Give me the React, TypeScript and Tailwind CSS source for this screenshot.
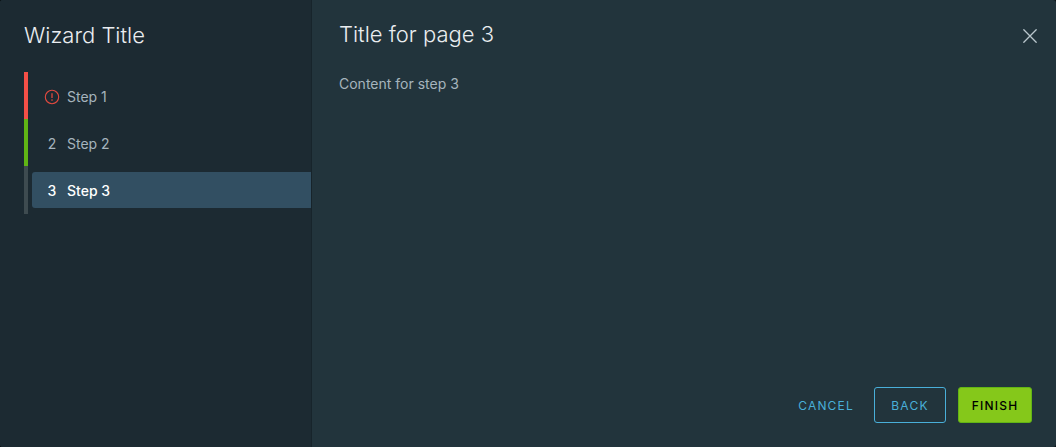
import React from "react";

function ErrorIcon() {
  return (
    <svg viewBox="0 0 16 16" className="h-4 w-4" fill="none" aria-label="Error" role="img">
      <circle cx="8" cy="8" r="6.7" stroke="#e0493f" strokeWidth="1.1" />
      <path d="M8 4.2v4.8" stroke="#e0493f" strokeWidth="1.3" />
      <circle cx="8" cy="11.1" r="0.8" fill="#e0493f" />
    </svg>
  );
}

const steps = [
  { label: "Step 1", marker: <ErrorIcon />, bar: "border-[#f54f47]", state: "text-[#a6b4bd]" },
  { label: "Step 2", marker: "2", bar: "border-[#60b515]", state: "text-[#a6b4bd]" },
  { label: "Step 3", marker: "3", bar: "border-[#3e4b50]", state: "bg-[#324f62] font-medium text-white" },
];

export default function App() {
  return (
    <div className="min-h-screen bg-[#0b1014] font-['Inter',sans-serif]">
      <div
        role="dialog"
        aria-labelledby="wizard-title"
        className="flex min-h-screen overflow-hidden rounded-[3px] bg-[#22343c] text-sm text-[#a6b4bd]"
      >
        <aside className="w-78 shrink-0 border-r border-[#17242b] bg-[#1c2a32] pt-5 pl-6">
          <h1 id="wizard-title" className="text-[22px] leading-[30px] font-light text-[#eaedf0]">
            Wizard Title
          </h1>
          <ol className="mt-[22px]">
            {steps.map((step, i) => (
              <li key={step.label} className={`flex h-12 items-center border-l-4 pl-1 not-first:-mt-px ${step.bar}`}>
                <button
                  type="button"
                  aria-current={i === 2 ? "step" : undefined}
                  className={`flex h-9 w-full items-center gap-[7px] rounded-l-[3px] pt-0.5 pl-3 text-left ${step.state}`}
                >
                  <span className="flex w-4 justify-center">{step.marker}</span>
                  <span>{step.label}</span>
                </button>
              </li>
            ))}
          </ol>
        </aside>
        <main className="flex min-w-0 grow flex-col py-6 pr-6 pl-[27px]">
          <header className="flex items-start justify-between">
            <h2 className="-mt-1 text-[22px] leading-7 font-light text-[#eaedf0]">Title for page 3</h2>
            <button type="button" aria-label="Close" className="-mr-2 flex h-6 w-5 items-center justify-center">
              <svg viewBox="0 0 16 16" className="h-4 w-4" stroke="#b9c6cc" strokeWidth="1.3" strokeLinecap="round">
                <path d="M1.8 1.8l12.4 12.4M14.2 1.8L1.8 14.2" />
              </svg>
            </button>
          </header>
          <p className="mt-6 grow leading-6">Content for step 3</p>
          <footer className="flex justify-end gap-3 text-xs tracking-widest">
            <button type="button" className="h-9 px-2 pt-0.5 text-[#49afd9]">CANCEL</button>
            <button type="button" className="h-9 w-18 rounded-[3px] border border-[#49afd9] pt-0.5 text-[#49afd9]">
              BACK
            </button>
            <button
              type="button"
              className="h-9 w-[74px] rounded-[3px] border border-[#62b515] bg-[#85c81a] pt-0.5 font-medium text-black"
            >
              FINISH
            </button>
          </footer>
        </main>
      </div>
    </div>
  );
}
